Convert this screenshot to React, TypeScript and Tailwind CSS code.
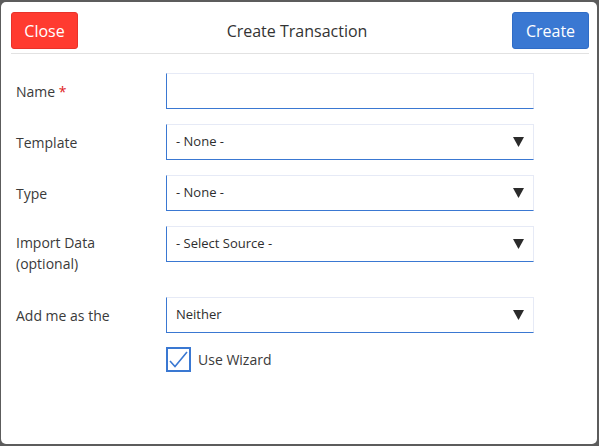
import React from 'react';

const font = { fontFamily: '"Open Sans", "Noto Sans", sans-serif' };

function Caret() {
  return (
    <svg width="11" height="10" viewBox="0 0 11 10" className="shrink-0">
      <path d="M0 0 H11 L5.5 10 Z" fill="#2b2b2b" />
    </svg>
  );
}

function Field({ value, select }: { value?: string; select?: boolean }) {
  return (
    <div className="w-[368px] h-[36px] flex items-center justify-between pl-[9px] pr-[9px] bg-white border border-t-[#e6eaf6] border-r-[#e6eaf6] border-l-[#3a78d2] border-b-[#3a78d2] text-[13px] text-[#2e2e2e]">
      <span>{value}</span>
      {select && <Caret />}
    </div>
  );
}

function Row({ label, children, tall, className = '' }: { label: React.ReactNode; children: React.ReactNode; tall?: boolean; className?: string }) {
  return (
    <div className={`flex ${tall ? 'items-start' : 'items-center'} ${className}`}>
      <div className={`w-[150px] text-[14px] leading-[21px] text-[#3a3a3a] ${tall ? 'pt-[6px]' : ''}`}>{label}</div>
      {children}
    </div>
  );
}

export default function App() {
  return (
    <div className="w-[599px] h-[446px] bg-[#5c5c5c] pl-[1px] pt-[2px] pr-[2px] pb-[2px]" style={font}>
      <div className="bg-white rounded-[5px] h-full">
        {/* header */}
        <div className="ml-[10px] mr-[8px] pt-[10px] pb-[4px] flex items-center justify-between border-b border-[#e2e2e2]">
          <button className="w-[67px] h-[37px] rounded-[3px] bg-[#ff3b30] border border-[#e8322a] text-white text-[16px]">
            Close
          </button>
          <h2 className="text-[16px] text-[#333] pl-[4px]">Create Transaction</h2>
          <button className="w-[77px] h-[37px] rounded-[3px] bg-[#3a78d2] border border-[#2f6cc6] text-white text-[16px]">
            Create
          </button>
        </div>

        {/* form */}
        <div className="pl-[15px] pt-[19px] flex flex-col gap-[15px]">
          <Row label={<>Name <span className="text-[#e02020]">*</span></>}>
            <Field />
          </Row>
          <Row label="Template">
            <Field value="- None -" select />
          </Row>
          <Row label="Type">
            <Field value="- None -" select />
          </Row>
          <Row label={<>Import Data<br />(optional)</>} tall>
            <Field value="- Select Source -" select />
          </Row>
          <Row label="Add me as the" className="mt-[8px]">
            <Field value="Neither" select />
          </Row>
          <div className="flex items-center -mt-[1px]">
            <div className="w-[150px]" />
            <div className="w-[25px] h-[25px] border-2 border-[#3a78d2] flex items-center justify-center">
              <svg width="19" height="17" viewBox="0 0 19 17">
                <path d="M1 10 L6 15.5 L18 1" fill="none" stroke="#3a78d2" strokeWidth="1.6" />
              </svg>
            </div>
            <span className="ml-[7px] text-[14px] text-[#3a3a3a]">Use Wizard</span>
          </div>
        </div>
      </div>
    </div>
  );
}
